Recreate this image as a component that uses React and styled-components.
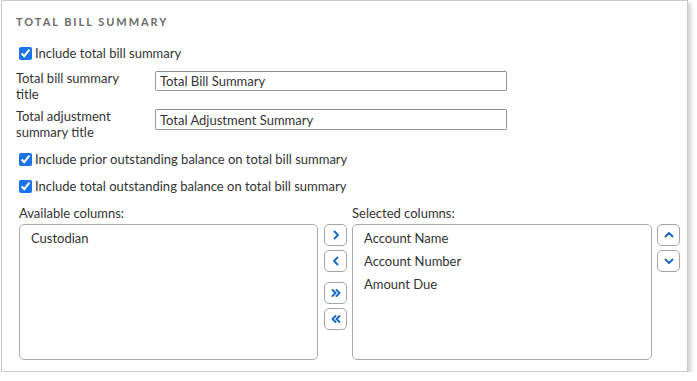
import React from "react";
import styled, { createGlobalStyle } from "styled-components";

const Global = createGlobalStyle`
  html, body { margin: 0; padding: 0; background: #fff; }
  body { font-family: Lato, "Open Sans", sans-serif; color: #333; font-size: 13px; }
`;

const Card = styled.div`
  box-sizing: border-box;
  margin-left: 1px;
  width: 687px;
  height: 372px;
  border: 1px solid #c8c8c8;
  box-shadow: 3px 3px 4px rgba(0, 0, 0, 0.18);
  padding: 14px 0 0 13px;
`;

const Title = styled.h2`
  margin: 0 0 0 1px;
  font-size: 11px;
  font-weight: 700;
  letter-spacing: 1.95px;
  color: #6b6b6b;
  line-height: 14px;
  text-transform: uppercase;
`;

const CheckRow = styled.label`
  display: flex;
  align-items: center;
  height: 16px;
  margin-top: ${(p) => p.$mt}px;
  cursor: pointer;
`;

const Check = styled.input`
  width: 13px;
  height: 13px;
  margin: 0 3px 0 4px;
  accent-color: #1a73e8;
`;

const FieldRow = styled.div`
  display: flex;
  align-items: flex-start;
  margin-top: ${(p) => p.$mt}px;
`;

const FieldLabel = styled.div`
  width: 139px;
  margin-left: 1px;
  line-height: 15.5px;
`;

const TextInput = styled.input`
  box-sizing: border-box;
  width: 352px;
  height: ${(p) => p.$h}px;
  border: 1px solid #999;
  border-top-color: #8a8a8a;
  border-radius: 2px;
  padding: 0 4px;
  font-family: inherit;
  font-size: 13px;
  color: #333;
  outline: none;
`;

const Columns = styled.div`
  display: flex;
  margin-top: 11px;
  margin-left: 4px;
`;

const ColumnGroup = styled.div`
  display: flex;
  flex-direction: column;
`;

const ColumnLabel = styled.div`
  line-height: 16px;
  height: 16px;
  margin-bottom: 3px;
`;

const ListBox = styled.div`
  box-sizing: border-box;
  width: ${(p) => p.$w}px;
  height: 136px;
  border: 1px solid #aaa;
  border-radius: 5px;
  padding-top: 2px;
`;

const ListItem = styled.div`
  line-height: 23px;
  padding-left: ${(p) => p.$pl}px;
`;

const ButtonStack = styled.div`
  display: flex;
  flex-direction: column;
  margin-top: 19px;
  margin-left: ${(p) => p.$ml}px;
  margin-right: ${(p) => p.$mr}px;
`;

const IconButton = styled.button`
  box-sizing: border-box;
  width: 23px;
  height: 22px;
  padding: 0;
  margin-bottom: ${(p) => p.$mb}px;
  border: 1px solid #a5a5a5;
  border-radius: 5px;
  background: #fff;
  display: flex;
  align-items: center;
  justify-content: center;
  color: #1769c4;
  cursor: pointer;
`;

const Chevron = ({ d }) => (
  <svg width="12" height="12" viewBox="0 0 12 12" fill="none" stroke="currentColor" strokeWidth="1.9" strokeLinecap="round" strokeLinejoin="round">
    <path d={d} />
  </svg>
);

const icons = {
  right: "M4.5 2.5 L8 6 L4.5 9.5",
  left: "M7.5 2.5 L4 6 L7.5 9.5",
  rightAll: "M2.5 3 L5.5 6 L2.5 9 M6.5 3 L9.5 6 L6.5 9",
  leftAll: "M5.5 3 L2.5 6 L5.5 9 M9.5 3 L6.5 6 L9.5 9",
  up: "M2.5 7.5 L6 4 L9.5 7.5",
  down: "M2.5 4.5 L6 8 L9.5 4.5",
};

export default function App() {
  return (
    <>
      <Global />
      <Card>
        <Title>Total Bill Summary</Title>
        <CheckRow $mt={16}>
          <Check type="checkbox" defaultChecked />
          Include total bill summary
        </CheckRow>
        <FieldRow $mt={10}>
          <FieldLabel>Total bill summary<br />title</FieldLabel>
          <TextInput $h={20} defaultValue="Total Bill Summary" />
        </FieldRow>
        <FieldRow $mt={7}>
          <FieldLabel>Total adjustment<br />summary title</FieldLabel>
          <TextInput $h={21} defaultValue="Total Adjustment Summary" />
        </FieldRow>
        <CheckRow $mt={11}>
          <Check type="checkbox" defaultChecked />
          Include prior outstanding balance on total bill summary
        </CheckRow>
        <CheckRow $mt={11}>
          <Check type="checkbox" defaultChecked />
          Include total outstanding balance on total bill summary
        </CheckRow>
        <Columns>
          <ColumnGroup>
            <ColumnLabel>Available columns:</ColumnLabel>
            <ListBox $w={299}>
              <ListItem $pl={11}>Custodian</ListItem>
            </ListBox>
          </ColumnGroup>
          <ButtonStack $ml={6} $mr={5}>
            <IconButton $mb={4}><Chevron d={icons.right} /></IconButton>
            <IconButton $mb={10}><Chevron d={icons.left} /></IconButton>
            <IconButton $mb={4}><Chevron d={icons.rightAll} /></IconButton>
            <IconButton $mb={0}><Chevron d={icons.leftAll} /></IconButton>
          </ButtonStack>
          <ColumnGroup>
            <ColumnLabel>Selected columns:</ColumnLabel>
            <ListBox $w={300}>
              <ListItem $pl={11}>Account Name</ListItem>
              <ListItem $pl={11}>Account Number</ListItem>
              <ListItem $pl={11}>Amount Due</ListItem>
            </ListBox>
          </ColumnGroup>
          <ButtonStack $ml={5} $mr={0}>
            <IconButton $mb={4}><Chevron d={icons.up} /></IconButton>
            <IconButton $mb={0}><Chevron d={icons.down} /></IconButton>
          </ButtonStack>
        </Columns>
      </Card>
    </>
  );
}
